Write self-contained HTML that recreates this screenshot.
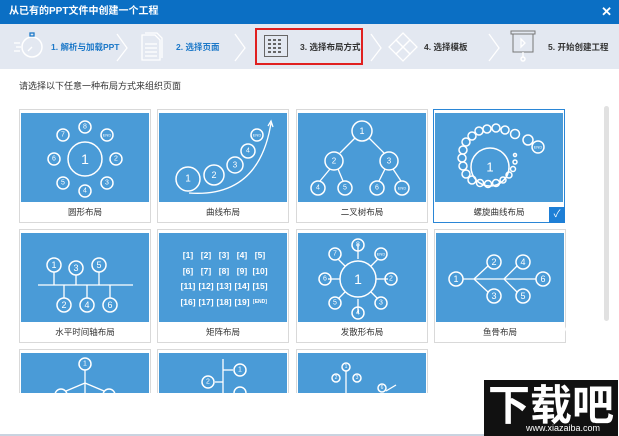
<!DOCTYPE html>
<html><head><meta charset="utf-8">
<style>
*{margin:0;padding:0;box-sizing:border-box}
body{width:619px;height:436px;overflow:hidden;background:#fff;font-family:"Liberation Sans","Noto Sans CJK SC",sans-serif;position:relative}
.title{position:absolute;left:0;top:0;width:619px;height:24px;background:#0b6fc4;color:#fff;font-size:10px;font-weight:bold;line-height:24px;padding-left:9px}
.close{position:absolute;right:7px;top:0;color:#fff;font-size:13px;font-weight:bold}
.steps{position:absolute;left:0;top:24px;width:619px;height:45px;background:#e3e8f1}
.st{position:absolute;top:17px;font-size:8.5px;font-weight:bold;color:#333}
.blue{color:#1c78c8}
.red{position:absolute;left:255px;top:4px;width:108px;height:37px;border:2px solid #e02020}
.hint{position:absolute;left:19px;top:79px;font-size:9px;color:#333}
.card{position:absolute;width:132px;height:114px;border:1px solid #d9d9d9;background:#fff}
.card svg{position:absolute;left:1px;top:3px;width:128px;height:89px;background:#4a9bd7}
.card .lb{position:absolute;left:0;top:92px;width:130px;height:20px;text-align:center;font-size:8.5px;line-height:20px;color:#333}
.sel{border:1px solid #2a86d6}
.chk{position:absolute;right:-1px;bottom:-1px;width:16px;height:16px;background:#1e7fd6;color:#fff;font-size:10px;text-align:center;line-height:16px}
.cut{height:44px;overflow:hidden;border-bottom:none}
svg circle{fill:none;stroke:#fff;stroke-width:1.5}
svg line,svg path{stroke:#fff;stroke-width:1.3;fill:none}
svg text{fill:#fff;font-family:"Liberation Sans",sans-serif;text-anchor:middle;dominant-baseline:central}
.scroll{position:absolute;left:604px;top:106px;width:5px;height:215px;background:#e1e1e1;border-radius:3px}
.logo{position:absolute;left:484px;top:380px;width:134px;height:56px;background:#111}
</style></head><body>
<div class="title">从已有的PPT文件中创建一个工程<span class="close">✕</span></div>
<div class="steps">
<svg style="position:absolute;left:12px;top:6px" width="32" height="32" viewBox="0 0 32 32"><g stroke="#1c78c8" fill="none" stroke-width="1.3"><circle cx="20" cy="17" r="10"/><line x1="20" y1="17" x2="16" y2="21"/><rect x="18" y="3" width="4" height="3"/><line x1="2" y1="13" x2="8" y2="13"/><line x1="4" y1="17" x2="9" y2="17"/><line x1="2" y1="21" x2="8" y2="21"/></g></svg>
<div class="st blue" style="left:51px">1. 解析与加载PPT</div>
<svg style="position:absolute;left:114px;top:8px" width="20" height="30"><path d="M3 2 L13 16 L3 29" stroke="#aaa" fill="none"/></svg>
<svg style="position:absolute;left:140px;top:8px" width="24" height="30" viewBox="0 0 24 30"><g stroke="#1c78c8" fill="none" stroke-width="1.2"><path d="M2 3h13l5 5v20H2z"/><path d="M5 1h12l5 5v20"/><line x1="5" y1="12" x2="17" y2="12"/><line x1="5" y1="16" x2="17" y2="16"/><line x1="5" y1="20" x2="17" y2="20"/><line x1="5" y1="24" x2="17" y2="24"/></g></svg>
<div class="st blue" style="left:176px">2. 选择页面</div>
<svg style="position:absolute;left:232px;top:8px" width="20" height="30"><path d="M3 2 L13 16 L3 29" stroke="#aaa" fill="none"/></svg>
<svg style="position:absolute;left:264px;top:11px" width="24" height="22" viewBox="0 0 24 22"><rect x="0.5" y="0.5" width="23" height="21" stroke="#666" fill="none"/><g fill="#666"><rect x="4" y="4" width="3" height="2"/><rect x="9" y="4" width="3" height="2"/><rect x="14" y="4" width="3" height="2"/><rect x="4" y="8" width="3" height="2"/><rect x="9" y="8" width="3" height="2"/><rect x="14" y="8" width="3" height="2"/><rect x="4" y="12" width="3" height="2"/><rect x="9" y="12" width="3" height="2"/><rect x="14" y="12" width="3" height="2"/><rect x="4" y="16" width="3" height="2"/><rect x="9" y="16" width="3" height="2"/><rect x="14" y="16" width="3" height="2"/></g></svg>
<div class="st" style="left:300px">3. 选择布局方式</div>
<div class="red"></div>
<svg style="position:absolute;left:368px;top:8px" width="20" height="30"><path d="M3 2 L13 16 L3 29" stroke="#aaa" fill="none"/></svg>
<svg style="position:absolute;left:388px;top:8px" width="30" height="30" viewBox="0 0 30 30"><g stroke="#777" fill="none"><path d="M15 1 L22 8 L15 15 L8 8Z"/><path d="M8 8 L15 15 L8 22 L1 15Z"/><path d="M22 8 L29 15 L22 22 L15 15Z"/><path d="M15 15 L22 22 L15 29 L8 22Z"/></g></svg>
<div class="st" style="left:424px">4. 选择模板</div>
<svg style="position:absolute;left:486px;top:8px" width="20" height="30"><path d="M3 2 L13 16 L3 29" stroke="#aaa" fill="none"/></svg>
<svg style="position:absolute;left:510px;top:6px" width="26" height="34" viewBox="0 0 26 34"><g stroke="#777" fill="none"><rect x="1" y="1" width="24" height="3"/><rect x="3" y="4" width="20" height="18"/><path d="M11 9 L15 13 L11 17Z"/><line x1="13" y1="22" x2="13" y2="27"/><circle cx="13" cy="29" r="2"/></g></svg>
<div class="st" style="left:548px">5. 开始创建工程</div>
</div>
<div class="hint">请选择以下任意一种布局方式来组织页面</div>
<div class="scroll"></div>

<div class="card" style="left:19px;top:109px"><svg viewBox="0 0 128 89">
<circle cx="64" cy="46" r="17"/><text x="64" y="46" font-size="14">1</text>
<circle cx="64" cy="14" r="6"/><text x="64" y="14" font-size="7">8</text>
<circle cx="86" cy="22" r="6"/><text x="86" y="22" font-size="4">END</text>
<circle cx="95" cy="46" r="6"/><text x="95" y="46" font-size="7">2</text>
<circle cx="86" cy="70" r="6"/><text x="86" y="70" font-size="7">3</text>
<circle cx="64" cy="78" r="6"/><text x="64" y="78" font-size="7">4</text>
<circle cx="42" cy="70" r="6"/><text x="42" y="70" font-size="7">5</text>
<circle cx="33" cy="46" r="6"/><text x="33" y="46" font-size="7">6</text>
<circle cx="42" cy="22" r="6"/><text x="42" y="22" font-size="7">7</text>
</svg><div class="lb">圆形布局</div></div>

<div class="card" style="left:157px;top:109px"><svg viewBox="0 0 128 89">
<path d="M30 80 Q100 85 112 10"/><path d="M109 13 L112 8 L114 14"/>
<circle cx="29" cy="66" r="12"/><text x="29" y="66" font-size="10">1</text>
<circle cx="55" cy="62" r="10"/><text x="55" y="62" font-size="9">2</text>
<circle cx="76" cy="52" r="8"/><text x="76" y="52" font-size="8">3</text>
<circle cx="89" cy="38" r="7"/><text x="89" y="38" font-size="7">4</text>
<circle cx="98" cy="22" r="6"/><text x="98" y="22" font-size="4">END</text>
</svg><div class="lb">曲线布局</div></div>

<div class="card" style="left:296px;top:109px"><svg viewBox="0 0 128 89">
<line x1="57" y1="25" x2="42" y2="40"/><line x1="71" y1="25" x2="86" y2="40"/>
<line x1="32" y1="56" x2="22" y2="68"/><line x1="40" y1="56" x2="45" y2="68"/><line x1="87" y1="56" x2="81" y2="68"/><line x1="95" y1="56" x2="103" y2="68"/>
<circle cx="64" cy="18" r="10"/><text x="64" y="18" font-size="9">1</text>
<circle cx="36" cy="48" r="9"/><text x="36" y="48" font-size="8">2</text>
<circle cx="91" cy="48" r="9"/><text x="91" y="48" font-size="8">3</text>
<circle cx="20" cy="75" r="7"/><text x="20" y="75" font-size="7">4</text>
<circle cx="47" cy="75" r="7"/><text x="47" y="75" font-size="7">5</text>
<circle cx="79" cy="75" r="7"/><text x="79" y="75" font-size="7">6</text>
<circle cx="104" cy="75" r="7"/><text x="104" y="75" font-size="4">END</text>
</svg><div class="lb">二叉树布局</div></div>

<div class="card sel" style="left:433px;top:109px"><svg viewBox="0 0 128 89">
<circle cx="55" cy="54" r="19"/><text x="55" y="54" font-size="13">1</text>
<circle cx="80" cy="42" r="1.5"/><circle cx="80" cy="49" r="2"/><circle cx="78" cy="56" r="2.5"/><circle cx="74" cy="62" r="3"/><circle cx="68" cy="67" r="3"/><circle cx="61" cy="70" r="3.5"/><circle cx="53" cy="71" r="3.5"/><circle cx="45" cy="70" r="3.5"/>
<circle cx="37" cy="67" r="4"/><circle cx="31" cy="61" r="4"/><circle cx="28" cy="53" r="4"/><circle cx="27" cy="45" r="4"/><circle cx="28" cy="37" r="4"/><circle cx="31" cy="29" r="4"/><circle cx="37" cy="23" r="4"/><circle cx="44" cy="18" r="4"/><circle cx="52" cy="16" r="4"/><circle cx="61" cy="15" r="4"/><circle cx="70" cy="17" r="4"/><circle cx="80" cy="21" r="4.5"/><circle cx="103" cy="34" r="6"/><text x="103" y="34" font-size="4">END</text><circle cx="93" cy="27" r="5"/>
</svg><div class="lb">螺旋曲线布局</div><div class="chk">✓</div></div>

<div class="card" style="left:19px;top:229px"><svg viewBox="0 0 128 89">
<line x1="17" y1="52" x2="112" y2="52"/>
<line x1="33" y1="39" x2="33" y2="52"/><line x1="55" y1="42" x2="55" y2="52"/><line x1="78" y1="39" x2="78" y2="52"/>
<line x1="43" y1="52" x2="43" y2="65"/><line x1="66" y1="52" x2="66" y2="65"/><line x1="89" y1="52" x2="89" y2="65"/>
<circle cx="33" cy="32" r="7"/><text x="33" y="32" font-size="9">1</text>
<circle cx="55" cy="35" r="7"/><text x="55" y="35" font-size="9">3</text>
<circle cx="78" cy="32" r="7"/><text x="78" y="32" font-size="9">5</text>
<circle cx="43" cy="72" r="7"/><text x="43" y="72" font-size="9">2</text>
<circle cx="66" cy="72" r="7"/><text x="66" y="72" font-size="9">4</text>
<circle cx="89" cy="72" r="7"/><text x="89" y="72" font-size="9">6</text>
</svg><div class="lb">水平时间轴布局</div></div>

<div class="card" style="left:157px;top:229px"><svg viewBox="0 0 128 89"><g font-size="8.5" font-weight="bold">
<text x="29" y="22">[1]</text><text x="47" y="22">[2]</text><text x="65" y="22">[3]</text><text x="83" y="22">[4]</text><text x="101" y="22">[5]</text>
<text x="29" y="38">[6]</text><text x="47" y="38">[7]</text><text x="65" y="38">[8]</text><text x="83" y="38">[9]</text><text x="101" y="38">[10]</text>
<text x="29" y="53">[11]</text><text x="47" y="53">[12]</text><text x="65" y="53">[13]</text><text x="83" y="53">[14]</text><text x="101" y="53">[15]</text>
<text x="29" y="69">[16]</text><text x="47" y="69">[17]</text><text x="65" y="69">[18]</text><text x="83" y="69">[19]</text><text x="101" y="69" font-size="5">[END]</text></g>
</svg><div class="lb">矩阵布局</div></div>

<div class="card" style="left:296px;top:229px"><svg viewBox="0 0 128 89">
<line x1="60" y1="11" x2="60" y2="26"/><line x1="60" y1="66" x2="60" y2="80"/><line x1="30" y1="46" x2="42" y2="46"/><line x1="78" y1="46" x2="90" y2="46"/>
<line x1="40" y1="26" x2="47" y2="33"/><line x1="80" y1="26" x2="73" y2="33"/><line x1="40" y1="66" x2="47" y2="59"/><line x1="80" y1="66" x2="73" y2="59"/>
<circle cx="60" cy="46" r="18"/><text x="60" y="46" font-size="14">1</text>
<circle cx="60" cy="12" r="6"/><text x="60" y="12" font-size="7">8</text>
<circle cx="83" cy="21" r="6"/><text x="83" y="21" font-size="4">END</text>
<circle cx="93" cy="46" r="6"/><text x="93" y="46" font-size="7">2</text>
<circle cx="83" cy="70" r="6"/><text x="83" y="70" font-size="7">3</text>
<circle cx="60" cy="80" r="6"/><text x="60" y="80" font-size="7">4</text>
<circle cx="37" cy="70" r="6"/><text x="37" y="70" font-size="7">5</text>
<circle cx="27" cy="46" r="6"/><text x="27" y="46" font-size="7">6</text>
<circle cx="37" cy="21" r="6"/><text x="37" y="21" font-size="7">7</text>
</svg><div class="lb">发散形布局</div></div>

<div class="card" style="left:434px;top:229px"><svg viewBox="0 0 128 89">
<line x1="27" y1="46" x2="100" y2="46"/><line x1="38" y1="46" x2="52" y2="33"/><line x1="38" y1="46" x2="52" y2="59"/><line x1="68" y1="46" x2="81" y2="33"/><line x1="68" y1="46" x2="81" y2="59"/>
<circle cx="20" cy="46" r="7"/><text x="20" y="46" font-size="9">1</text>
<circle cx="58" cy="29" r="7"/><text x="58" y="29" font-size="9">2</text>
<circle cx="58" cy="63" r="7"/><text x="58" y="63" font-size="9">3</text>
<circle cx="87" cy="29" r="7"/><text x="87" y="29" font-size="9">4</text>
<circle cx="87" cy="63" r="7"/><text x="87" y="63" font-size="9">5</text>
<circle cx="107" cy="46" r="7"/><text x="107" y="46" font-size="9">6</text>
</svg><div class="lb">鱼骨布局</div></div>

<div class="card cut" style="left:19px;top:349px"><svg viewBox="0 0 128 89">
<circle cx="64" cy="11" r="6"/><text x="64" y="11" font-size="7">1</text><line x1="64" y1="17" x2="64" y2="89"/><line x1="64" y1="30" x2="45" y2="38"/><line x1="64" y1="30" x2="83" y2="38"/><circle cx="40" cy="42" r="6"/><circle cx="88" cy="42" r="6"/>
</svg></div>
<div class="card cut" style="left:157px;top:349px"><svg viewBox="0 0 128 89">
<line x1="64" y1="6" x2="64" y2="89"/><line x1="64" y1="17" x2="74" y2="17"/><line x1="56" y1="29" x2="64" y2="29"/>
<circle cx="81" cy="17" r="6"/><text x="81" y="17" font-size="7">1</text><circle cx="49" cy="29" r="6"/><text x="49" y="29" font-size="7">2</text><circle cx="81" cy="40" r="6"/>
</svg></div>
<div class="card cut" style="left:296px;top:349px"><svg viewBox="0 0 128 89">
<line x1="48" y1="18" x2="48" y2="89"/><circle cx="48" cy="14" r="4"/><text x="48" y="14" font-size="5">1</text><circle cx="38" cy="25" r="4"/><text x="38" y="25" font-size="5">2</text><circle cx="59" cy="25" r="4"/><text x="59" y="25" font-size="5">3</text><circle cx="84" cy="35" r="4"/><text x="84" y="35" font-size="5">6</text><line x1="88" y1="38" x2="98" y2="32"/>
</svg></div>

<svg style="position:absolute;left:555px;top:322px" width="40" height="60"><line x1="8" y1="2" x2="30" y2="48" stroke="#e02020" stroke-width="3"/><path d="M20 44 L33 56 L36 38Z" fill="#e02020"/></svg>
<div class="logo"><div style="color:#fff;font-size:42px;font-weight:bold;line-height:46px;text-align:center;font-family:'Noto Sans CJK SC',sans-serif">下载吧</div><div style="position:absolute;left:42px;top:43px;color:#fff;font-size:9px">www.xiazaiba.com</div></div>
<div style="position:absolute;left:0;top:434px;width:484px;height:2px;background:#c9d3e0"></div>
</body></html>
